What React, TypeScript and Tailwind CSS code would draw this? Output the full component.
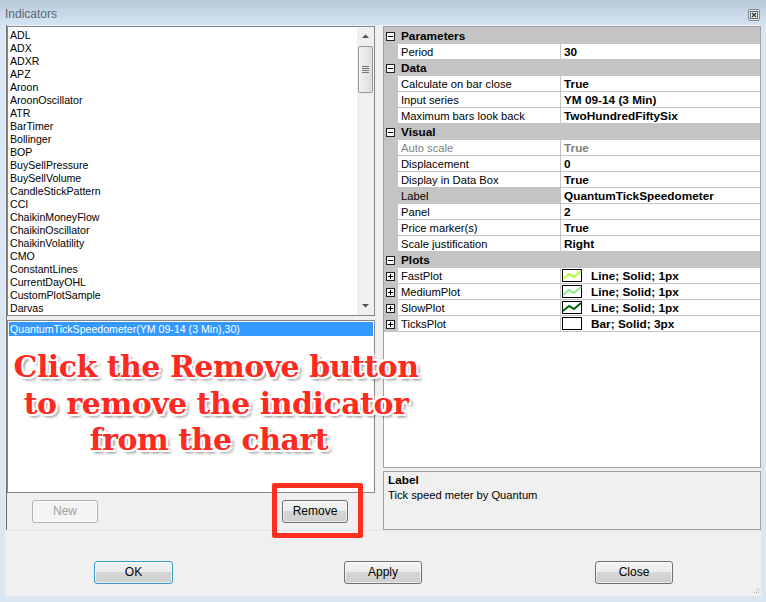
import React from "react";

const items = ["ADL","ADX","ADXR","APZ","Aroon","AroonOscillator","ATR","BarTimer","Bollinger","BOP","BuySellPressure","BuySellVolume","CandleStickPattern","CCI","ChaikinMoneyFlow","ChaikinOscillator","ChaikinVolatility","CMO","ConstantLines","CurrentDayOHL","CustomPlotSample","Darvas"];

type Row = { g?: string; n?: string; v?: string; dis?: boolean; sel?: boolean; plot?: string; };
const rows: Row[] = [
  { g: "Parameters" },
  { n: "Period", v: "30" },
  { g: "Data" },
  { n: "Calculate on bar close", v: "True" },
  { n: "Input series", v: "YM 09-14 (3 Min)" },
  { n: "Maximum bars look back", v: "TwoHundredFiftySix" },
  { g: "Visual" },
  { n: "Auto scale", v: "True", dis: true },
  { n: "Displacement", v: "0" },
  { n: "Display in Data Box", v: "True" },
  { n: "Label", v: "QuantumTickSpeedometer", sel: true },
  { n: "Panel", v: "2" },
  { n: "Price marker(s)", v: "True" },
  { n: "Scale justification", v: "Right" },
  { g: "Plots" },
  { n: "FastPlot", v: "Line; Solid; 1px", plot: "#adff2f" },
  { n: "MediumPlot", v: "Line; Solid; 1px", plot: "#90ee90" },
  { n: "SlowPlot", v: "Line; Solid; 1px", plot: "#006400" },
  { n: "TicksPlot", v: "Bar; Solid; 3px", plot: "none" },
];

function Box({ plus }: { plus?: boolean }) {
  return (
    <svg width="9" height="9" viewBox="0 0 9 9" className="block shrink-0">
      <rect x="0.5" y="0.5" width="8" height="8" fill="#ffffff" stroke="#222222" />
      <path d={plus ? "M2 4.5H7M4.5 2V7" : "M2 4.5H7"} stroke="#000000" />
    </svg>
  );
}

function Swatch({ color }: { color: string }) {
  return (
    <svg width="20" height="13" viewBox="0 0 20 13" className="block shrink-0">
      <rect x="0.5" y="0.5" width="19" height="12" fill="#ffffff" stroke="#000000" />
      {color !== "none" && <path d="M1 10L7 5L12 8L19 2" fill="none" stroke={color} strokeWidth="2" />}
    </svg>
  );
}

function Btn({ label, w, disabled, primary }: { label: string; w: string; disabled?: boolean; primary?: boolean }) {
  const cls = disabled
    ? "border-[#adb2b5] bg-[#f4f4f4] text-[#a0a0a0]"
    : primary
    ? "border-[#3c9dcc] bg-[linear-gradient(#f4f4f4_0%,#ececec_45%,#d6d6d6_50%,#cfcfcf_100%)] text-black"
    : "border-[#707070] bg-[linear-gradient(#f4f4f4_0%,#ececec_45%,#d6d6d6_50%,#cfcfcf_100%)] text-black";
  return (
    <div className={`${w} h-[23px] flex items-center justify-center rounded-[3px] border text-[12px] shadow-[inset_0_0_0_1px_rgba(255,255,255,0.6)] ${cls}`}>
      {label}
    </div>
  );
}

export default function App() {
  return (
    <div className="w-[766px] h-[602px] flex flex-col bg-[#dbe6f3] overflow-hidden font-['Liberation_Sans',Arial,sans-serif] text-[11.2px] leading-[13px] text-black">
      <div className="h-[25px] shrink-0 flex items-start justify-between pl-[5px] pr-[6px] bg-[linear-gradient(#b9c9d9,#d5e4f2)]">
        <span className="text-[12px] text-[#5c6672] pt-[8px]">Indicators</span>
        <div className="w-[12px] h-[12px] mt-[9px] flex items-center justify-center border border-[#7f8c9a] rounded-[2px] bg-[#dfe8f1]">
          <svg width="8" height="8" viewBox="0 0 8 8"><rect x="0.5" y="0.5" width="7" height="7" fill="#f4f7fa" stroke="#666" /><path d="M2 2L6 6M6 2L2 6" stroke="#333" strokeWidth="1.2" /></svg>
        </div>
      </div>

      <div className="relative mx-[5px] flex-1 flex flex-col bg-[#f0f0f0]">
        <div className="h-[506px] shrink-0 flex border-b border-[#e4e4e4]">
          <div className="ml-[1px] w-[369px] shrink-0 flex flex-col border-l border-[#6d6d6d] pt-[1px]">
            <div className="h-[290px] flex border border-[#828790] bg-white text-[10.6px]">
              <div className="flex-1 pl-[2px] pt-[2px]">
                {items.map((t) => (
                  <div key={t} className="h-[13px] whitespace-nowrap">{t}</div>
                ))}
              </div>
              <div className="w-[17px] flex flex-col items-center bg-[#f0f0f0]">
                <svg width="9" height="5" viewBox="0 0 9 5" className="mt-[7px]"><path d="M4.5 0.5L8 4H1Z" fill="#505050" /></svg>
                <div className="mt-[7px] w-[15px] h-[47px] flex flex-col items-center justify-center gap-[1px] rounded-[2px] border border-[#9a9a9a] bg-[linear-gradient(90deg,#f3f3f3,#dcdcdc)]">
                  <div className="w-[7px] h-[1px] bg-[#777]" />
                  <div className="w-[7px] h-[1px] bg-[#777]" />
                  <div className="w-[7px] h-[1px] bg-[#777]" />
                  <div className="w-[7px] h-[1px] bg-[#777]" />
                </div>
                <svg width="9" height="5" viewBox="0 0 9 5" className="mt-auto mb-[7px]"><path d="M4.5 4.5L8 1H1Z" fill="#505050" /></svg>
              </div>
            </div>
            <div className="mt-[4px] h-[173px] border border-[#828790] bg-white p-[1px] text-[10.6px]">
              <div className="h-[14px] pl-[1px] bg-[#3399ff] text-white whitespace-nowrap leading-[14px]">QuantumTickSpeedometer(YM 09-14 (3 Min),30)</div>
            </div>
            <div className="flex pl-[25px] pt-[7px] gap-[184px]">
              <Btn label="New" w="w-[66px]" disabled />
              <Btn label="Remove" w="w-[66px]" />
            </div>
          </div>

          <div className="ml-[8px] w-[378px] shrink-0 flex flex-col pt-[1px]">
            <div className="h-[442px] border border-[#a0a0a0] bg-white">
              <div className="h-[1px] bg-[#c4c4c4]" />
              {rows.map((r, i) =>
                r.g ? (
                  <div key={i} className="h-[16px] flex items-center bg-[#c4c4c4] pl-[2px] gap-[6px] font-bold text-[11.8px]">
                    <Box />
                    <span>{r.g}</span>
                  </div>
                ) : (
                  <div key={i} className="h-[16px] flex">
                    <div className="w-[14px] shrink-0 flex items-center pl-[2px] bg-[#c4c4c4]">{r.plot && <Box plus />}</div>
                    <div className={`w-[163px] shrink-0 pl-[3px] flex items-center whitespace-nowrap border-b border-r border-[#c4c4c4] ${r.sel ? "bg-[#c4c4c4]" : ""} ${r.dis ? "text-[#808080]" : ""}`}>
                      <span className="mt-[2px]">{r.n}</span>
                    </div>
                    <div className={`flex-1 flex items-center font-bold pl-[1px] gap-[9px] text-[11.8px] border-b border-[#c4c4c4] whitespace-nowrap ${r.dis ? "text-[#808080]" : ""}`}>
                      {r.plot && <Swatch color={r.plot} />}
                      <span className={r.plot ? "mt-[2px]" : "mt-[2px] pl-[2px]"}>{r.v}</span>
                    </div>
                  </div>
                )
              )}
            </div>
            <div className="mt-[3px] h-[59px] border border-[#a0a0a0] pl-[4px] pt-[1px] leading-[15px]">
              <div className="font-bold text-[11.8px]">Label</div>
              <div>Tick speed meter by Quantum</div>
            </div>
          </div>
        </div>

        <div className="relative flex-1 pl-[89px] pt-[30px] flex">
          <Btn label="OK" w="w-[79px]" primary />
          <div className="ml-[171px]"><Btn label="Apply" w="w-[78px]" /></div>
          <div className="ml-[173px]"><Btn label="Close" w="w-[78px]" /></div>
          <svg width="8" height="8" viewBox="0 0 8 8" className="absolute right-[1px] bottom-[1px]">
            <path d="M6 1h1v1H6zM4 3h1v1H4zM6 3h1v1H6zM2 5h1v1H2zM4 5h1v1H4zM6 5h1v1H6z" fill="#b0b0b0" />
          </svg>
        </div>

        <div className="absolute left-[-12px] top-[324px] w-[446px] text-center font-['DejaVu_Serif',serif] font-bold text-[30px] tracking-[-0.5px] leading-[36.5px] text-[#ff2a1f] [text-shadow:1px_0_0_#fff,-1px_0_0_#fff,0_1px_0_#fff,0_-1px_0_#fff,2px_2px_0_#fff,-2px_-2px_0_#fff,2px_-2px_0_#fff,-2px_2px_0_#fff,3px_3px_3px_rgba(0,0,0,0.5)]">
          <div className="whitespace-nowrap">Click the Remove button</div>
          <div className="whitespace-nowrap">to remove the indicator</div>
          <div className="whitespace-nowrap pr-[14px]">from the chart</div>
        </div>
        <div className="absolute left-[267px] top-[458px] w-[91px] h-[55px] border-[5px] border-[#ff2f1f] rounded-[2px]" />
      </div>
      <div className="h-[6px] shrink-0" />
    </div>
  );
}
